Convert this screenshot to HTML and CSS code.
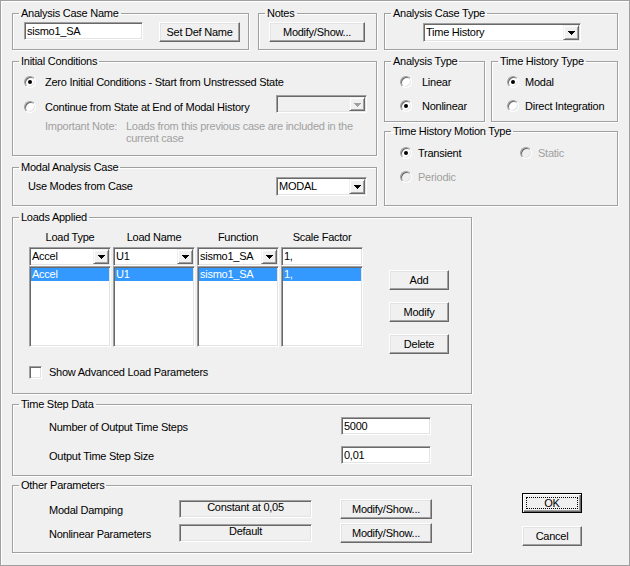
FILE: index.html
```html
<!DOCTYPE html>
<html>
<head>
<meta charset="utf-8">
<link rel="stylesheet" href="styles.css">
</head>
<body>
<div class="win">
  <div class="top">
    <div class="lcol">
      <div class="row1">
        <fieldset class="g g-name"><legend>Analysis Case Name</legend>
          <div class="body b-name"><div class="tb w-name">sismo1_SA</div><button class="btn w-setdef">Set Def Name</button></div>
        </fieldset>
        <fieldset class="g g-notes"><legend>Notes</legend>
          <div class="body b-notes"><button class="btn w-notes">Modify/Show...</button></div>
        </fieldset>
      </div>
      <fieldset class="g g-init"><legend>Initial Conditions</legend>
        <div class="body b-init">
          <div class="opt gap9"><span class="rb on"></span><span>Zero Initial Conditions - Start from Unstressed State</span></div>
          <div class="init-row2">
            <div class="opt gap9"><span class="rb"></span><span>Continue from State at End of Modal History</span></div>
            <div class="cb dis w-cont"><span class="cbt"></span><span class="cbb"><svg width="7" height="4" viewBox="0 0 7 4"><path d="M0 0h7v1H0zM1 1h5v1H1zM2 2h3v1H2zM3 3h1v1H3z"/></svg></span></div>
          </div>
          <div class="note"><span class="note-k">Important Note:</span><span class="note-v">Loads from this previous case are included in the<br>current case</span></div>
        </div>
      </fieldset>
      <fieldset class="g g-modal"><legend>Modal Analysis Case</legend>
        <div class="body b-modal">
          <span>Use Modes from Case</span>
          <div class="cb w-modal"><span class="cbt">MODAL</span><span class="cbb"><svg width="7" height="4" viewBox="0 0 7 4"><path d="M0 0h7v1H0zM1 1h5v1H1zM2 2h3v1H2zM3 3h1v1H3z"/></svg></span></div>
        </div>
      </fieldset>
    </div>
    <div class="rcol">
      <fieldset class="g g-ctype"><legend>Analysis Case Type</legend>
        <div class="body b-ctype">
          <div class="cb w-ctype"><span class="cbt">Time History</span><span class="cbb"><svg width="7" height="4" viewBox="0 0 7 4"><path d="M0 0h7v1H0zM1 1h5v1H1zM2 2h3v1H2zM3 3h1v1H3z"/></svg></span></div>
        </div>
      </fieldset>
      <div class="row2">
        <fieldset class="g g-atype"><legend>Analysis Type</legend>
          <div class="body b-radios">
            <div class="opt gap10"><span class="rb"></span><span>Linear</span></div>
            <div class="opt gap10"><span class="rb on"></span><span>Nonlinear</span></div>
          </div>
        </fieldset>
        <fieldset class="g g-thtype"><legend>Time History Type</legend>
          <div class="body b-radios">
            <div class="opt gap6"><span class="rb on"></span><span>Modal</span></div>
            <div class="opt gap6"><span class="rb"></span><span>Direct Integration</span></div>
          </div>
        </fieldset>
      </div>
      <fieldset class="g g-motion"><legend>Time History Motion Type</legend>
        <div class="body b-motion">
          <div class="opt gap6"><span class="rb on"></span><span>Transient</span></div>
          <div class="opt gap6 disabled"><span class="rb dis"></span><span>Static</span></div>
          <div class="opt gap6 disabled"><span class="rb dis"></span><span>Periodic</span></div>
        </div>
      </fieldset>
    </div>
  </div>
  <div class="bottom">
    <div class="blcol">
      <fieldset class="g g-loads"><legend>Loads Applied</legend>
        <div class="body b-loads">
          <div class="loads-main">
            <div class="grid4 hdr"><span>Load Type</span><span>Load Name</span><span>Function</span><span>Scale Factor</span></div>
            <div class="grid4 inputs">
              <div class="cb"><span class="cbt">Accel</span><span class="cbb"><svg width="7" height="4" viewBox="0 0 7 4"><path d="M0 0h7v1H0zM1 1h5v1H1zM2 2h3v1H2zM3 3h1v1H3z"/></svg></span></div>
              <div class="cb"><span class="cbt">U1</span><span class="cbb"><svg width="7" height="4" viewBox="0 0 7 4"><path d="M0 0h7v1H0zM1 1h5v1H1zM2 2h3v1H2zM3 3h1v1H3z"/></svg></span></div>
              <div class="cb"><span class="cbt">sismo1_SA</span><span class="cbb"><svg width="7" height="4" viewBox="0 0 7 4"><path d="M0 0h7v1H0zM1 1h5v1H1zM2 2h3v1H2zM3 3h1v1H3z"/></svg></span></div>
              <div class="tb tb19">1,</div>
            </div>
            <div class="grid4 lists">
              <div class="lb"><div class="li sel">Accel</div></div>
              <div class="lb"><div class="li sel">U1</div></div>
              <div class="lb"><div class="li sel">sismo1_SA</div></div>
              <div class="lb"><div class="li sel">1,</div></div>
            </div>
            <div class="chkrow"><span class="ck"></span><span>Show Advanced Load Parameters</span></div>
          </div>
          <div class="loads-btns">
            <button class="btn w-sm">Add</button>
            <button class="btn w-sm">Modify</button>
            <button class="btn w-sm">Delete</button>
          </div>
        </div>
      </fieldset>
      <fieldset class="g g-step"><legend>Time Step Data</legend>
        <div class="body b-step">
          <div class="frow"><span class="lbl-step">Number of Output Time Steps</span><div class="tb w-step">5000</div></div>
          <div class="frow"><span class="lbl-step">Output Time Step Size</span><div class="tb w-step">0,01</div></div>
        </div>
      </fieldset>
      <fieldset class="g g-other"><legend>Other Parameters</legend>
        <div class="body b-other">
          <div class="orow"><span class="lbl-other">Modal Damping</span><div class="ro">Constant at 0,05</div><button class="btn w-ms">Modify/Show...</button></div>
          <div class="orow"><span class="lbl-other">Nonlinear Parameters</span><div class="ro">Default</div><button class="btn w-ms">Modify/Show...</button></div>
        </div>
      </fieldset>
    </div>
    <div class="brcol">
      <button class="btn def w-sm"><span class="focus">OK</span></button>
      <button class="btn w-sm">Cancel</button>
    </div>
  </div>
</div>
</body>
</html>
```

FILE: styles.css
```css
* { box-sizing: border-box; }
html, body { margin: 0; padding: 0; }
body {
  background: #f0f0f0;
  font-family: "Liberation Sans", Arial, sans-serif;
  font-size: 11px;
  line-height: 13px;
  letter-spacing: -0.25px;
  color: #000;
}
.win {
  width: 630px;
  height: 566px;
  padding: 7px 0 0 12px;
  display: flex;
  flex-direction: column;
  box-shadow: inset 0 0 0 1px #a0a0a0, inset 1px 1px 0 1px #ffffff;
}
.top { display: flex; gap: 7px; height: 199px; }
.lcol { width: 365px; display: flex; flex-direction: column; }
.rcol { width: 234px; display: flex; flex-direction: column; }
.row1 { display: flex; gap: 9px; }
.row2 { display: flex; gap: 6px; margin-top: 5px; }

/* group boxes */
.g {
  margin: 0;
  padding: 0;
  min-width: 0;
  border: 1px solid #a0a0a0;
  box-shadow: inset 1px 1px 0 #ffffff, 1px 1px 0 #ffffff;
}
.g legend {
  padding: 0 2px;
  margin-left: 6px;
  line-height: 13px;
}
.g-name { width: 237px; height: 43px; }
.g-notes { width: 119px; height: 43px; }
.g-init { margin-top: 5px; height: 101px; }
.g-modal { margin-top: 5px; height: 45px; }
.g-ctype { height: 43px; }
.g-atype { width: 101px; height: 67px; }
.g-thtype { width: 127px; height: 67px; }
.g-motion { margin-top: 3px; height: 81px; }

.bottom { display: flex; margin-top: 5px; flex: 1; }
.blcol { width: 460px; display: flex; flex-direction: column; }
.g-loads { height: 183px; }
.g-step { margin-top: 4px; height: 78px; }
.g-other { margin-top: 3px; height: 74px; }
.brcol {
  padding: 0 0 20px 50px;
  display: flex;
  flex-direction: column;
  justify-content: flex-end;
  gap: 13px;
}

/* controls */
.btn {
  font: inherit;
  letter-spacing: inherit;
  color: #000;
  background: #f0f0f0;
  height: 20px;
  padding: 0;
  border: 1px solid;
  border-color: #ffffff #696969 #696969 #ffffff;
  box-shadow: inset -1px -1px 0 #a0a0a0, inset 1px 1px 0 #e3e3e3;
  text-align: center;
  flex: none;
}
.btn.def {
  border-color: #000;
  box-shadow: inset 1px 1px 0 #ffffff, inset -1px -1px 0 #696969, inset -2px -2px 0 #a0a0a0;
  padding: 3px 3px 3px 3px;
  display: flex;
}
.btn.def .focus {
  flex: 1;
  border: 1px dotted #000;
  line-height: 10px;
}
.tb {
  height: 18px;
  background: #fff;
  border: 1px solid;
  border-color: #a0a0a0 #ffffff #ffffff #a0a0a0;
  box-shadow: inset 1px 1px 0 #696969, inset -1px -1px 0 #e3e3e3;
  padding: 0 2px;
  line-height: 16px;
  white-space: nowrap;
  flex: none;
}
.tb19 { height: 19px; line-height: 17px; }
.ro {
  width: 133px;
  height: 18px;
  border: 1px solid;
  border-color: #a0a0a0 #ffffff #ffffff #a0a0a0;
  box-shadow: inset 1px 1px 0 #696969, inset -1px -1px 0 #e3e3e3;
  text-align: center;
  line-height: 13px;
  flex: none;
}
.cb {
  display: flex;
  height: 19px;
  background: #fff;
  border: 1px solid;
  border-color: #a0a0a0 #ffffff #ffffff #a0a0a0;
  box-shadow: inset 1px 1px 0 #696969, inset -1px -1px 0 #e3e3e3;
  padding: 1px;
  flex: none;
}
.cb.dis { background: #f0f0f0; }
.cbt {
  flex: 1;
  min-width: 0;
  padding-left: 1px;
  line-height: 15px;
  white-space: nowrap;
  overflow: hidden;
}
.cbb {
  width: 16px;
  display: flex;
  align-items: center;
  justify-content: center;
  background: #f0f0f0;
  border: 1px solid;
  border-color: #f0f0f0 #696969 #696969 #f0f0f0;
  box-shadow: inset 1px 1px 0 #ffffff, inset -1px -1px 0 #a0a0a0;
}
.cbb svg { display: block; fill: #000; margin-top: 1px; }
.cb.dis .cbb svg { fill: #a0a0a0; }

.rb {
  width: 12px;
  height: 12px;
  border-radius: 50%;
  background: #fff;
  border: 1px solid;
  border-color: #a0a0a0 #ffffff #ffffff #a0a0a0;
  box-shadow: inset 1px 1px 0 #696969, inset -1px -1px 0 #e3e3e3;
  position: relative;
  flex: none;
}
.rb.on::after {
  content: "";
  position: absolute;
  left: 3px;
  top: 3px;
  width: 4px;
  height: 4px;
  border-radius: 50%;
  background: #000;
}
.rb.dis { background: #f0f0f0; }
.ck {
  width: 13px;
  height: 13px;
  background: #fff;
  border: 1px solid;
  border-color: #a0a0a0 #ffffff #ffffff #a0a0a0;
  box-shadow: inset 1px 1px 0 #696969, inset -1px -1px 0 #e3e3e3;
  flex: none;
}
.opt { display: flex; align-items: center; height: 12px; white-space: nowrap; }
.gap9 { gap: 9px; }
.gap10 { gap: 10px; }
.gap6 { gap: 6px; }
.disabled { color: #a0a0a0; }

/* group contents */
.b-name { display: flex; align-items: flex-start; gap: 16px; padding: 2px 0 0 11px; }
.w-name { width: 119px; }
.w-setdef { width: 81px; }
.b-notes { padding: 2px 0 0 10px; }
.w-notes { width: 96px; }
.b-ctype { padding: 3px 0 0 38px; }
.w-ctype { width: 158px; }

.b-init { padding: 8px 9px 0 11px; }
.init-row2 { display: flex; align-items: flex-end; height: 18px; margin-top: 7px; }
.w-cont { width: 91px; height: 18px; margin-left: auto; }
.note { display: flex; margin-top: 7px; padding-left: 21px; color: #a0a0a0; line-height: 12px; white-space: nowrap; }
.note-k { width: 81px; flex: none; }

.b-modal { display: flex; align-items: center; padding: 3px 9px 0 15px; }
.w-modal { width: 91px; margin-left: auto; }

.b-radios { display: flex; flex-direction: column; gap: 12px; padding: 8px 0 0 15px; }
.b-motion { display: grid; grid-template-columns: 120px auto; row-gap: 12px; padding: 9px 0 0 15px; }

.b-loads { display: flex; padding: 7px 0 0 16px; }
.grid4 { display: grid; grid-template-columns: repeat(4, 82px); column-gap: 2px; }
.hdr { height: 13px; text-align: center; }
.inputs { margin-top: 3px; }
.lb {
  height: 81px;
  background: #fff;
  border: 1px solid;
  border-color: #a0a0a0 #ffffff #ffffff #a0a0a0;
  box-shadow: inset 1px 1px 0 #696969, inset -1px -1px 0 #e3e3e3;
  padding: 1px;
}
.li { height: 13px; line-height: 13px; padding-left: 1px; white-space: nowrap; }
.li.sel { background: #3399ff; color: #fff; }
.chkrow { display: flex; align-items: center; gap: 7px; margin-top: 19px; height: 13px; }
.loads-btns { display: flex; flex-direction: column; gap: 12px; margin: 39px 0 0 26px; }
.w-sm { width: 60px; }

.b-step { display: flex; flex-direction: column; gap: 11px; padding: 6px 0 0 36px; }
.frow { display: flex; align-items: center; height: 18px; }
.lbl-step { width: 292px; flex: none; padding-top: 2px; }
.w-step { width: 90px; }

.b-other { display: flex; flex-direction: column; gap: 4px; padding: 7px 0 0 36px; }
.orow { display: flex; align-items: center; height: 20px; }
.lbl-other { width: 130px; flex: none; padding-top: 2px; }
.w-ms { width: 92px; margin-left: 28px; }
```
